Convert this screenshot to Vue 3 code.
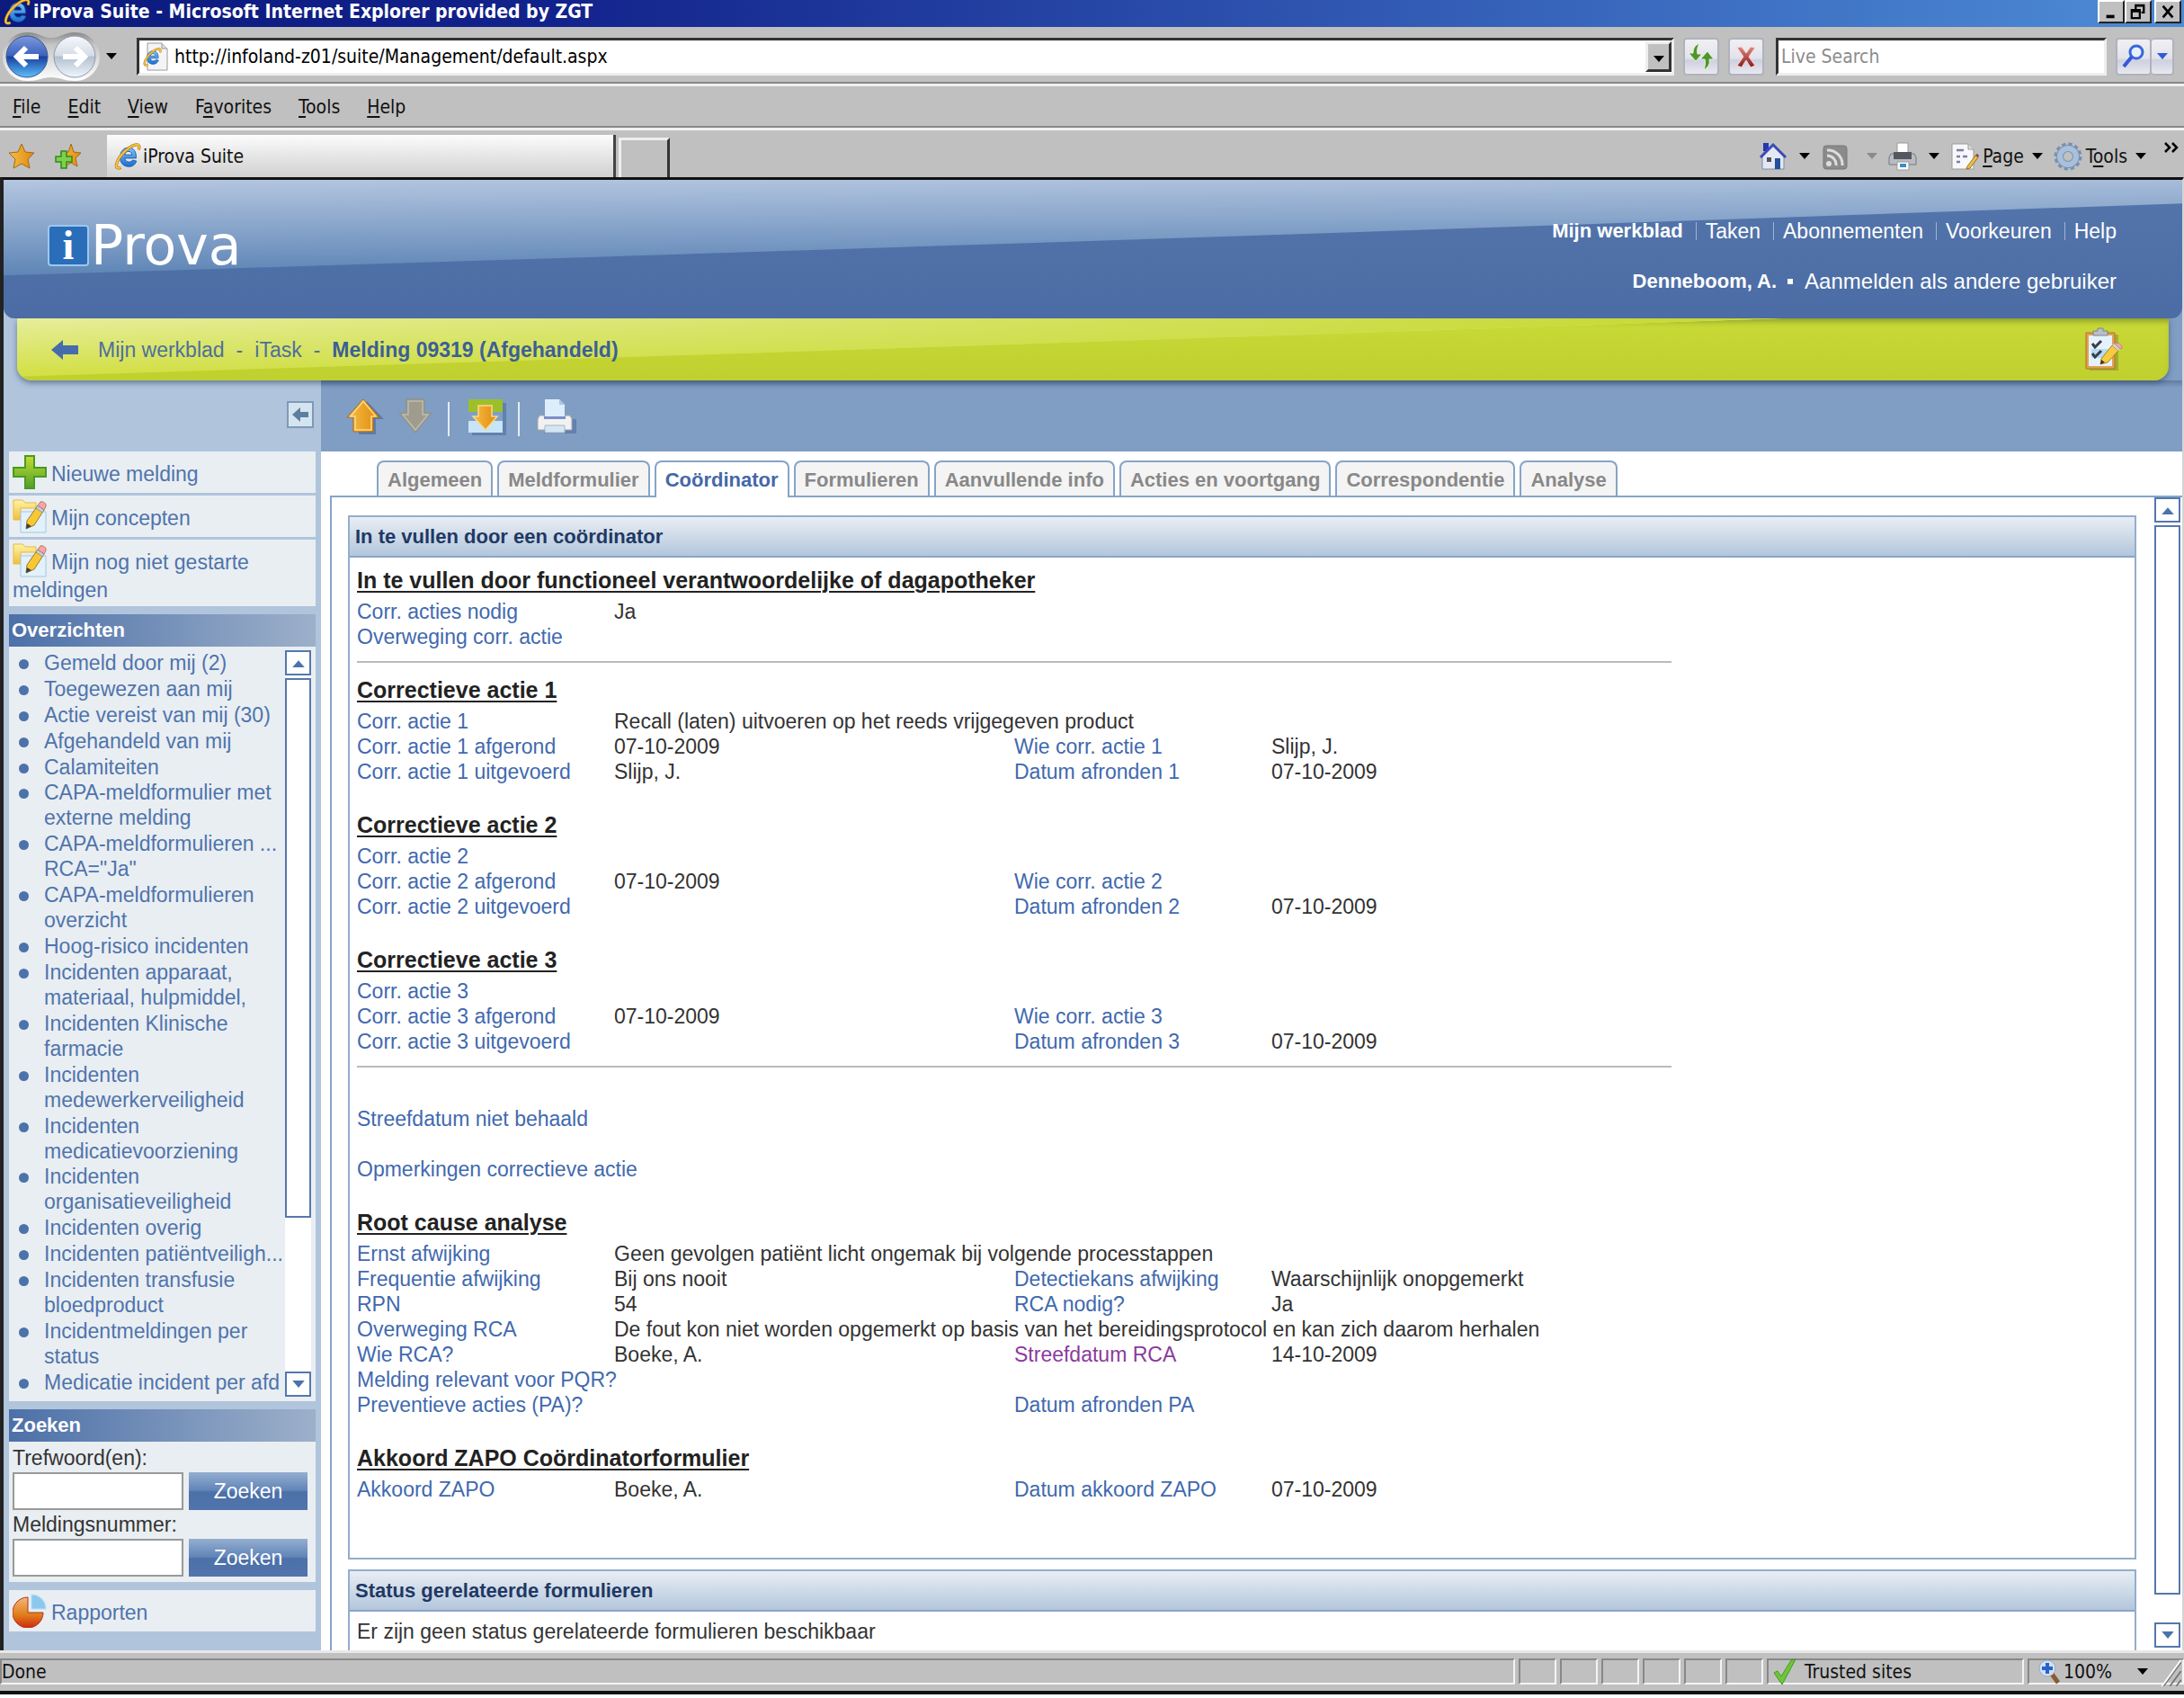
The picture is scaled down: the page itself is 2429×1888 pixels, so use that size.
<script setup>
import { ref } from 'vue'

const address = ref('http://infoland-z01/suite/Management/default.aspx')
const search = ref('')
const keyword = ref('')
const reportNumber = ref('')
const activeTab = ref('Coördinator')

// menu items: text before, the underlined key, text after
const menu = [
  ['', 'F', 'ile'],
  ['', 'E', 'dit'],
  ['', 'V', 'iew'],
  ['F', 'a', 'vorites'],
  ['', 'T', 'ools'],
  ['', 'H', 'elp'],
]

const tabs = [
  'Algemeen',
  'Meldformulier',
  'Coördinator',
  'Formulieren',
  'Aanvullende info',
  'Acties en voortgang',
  'Correspondentie',
  'Analyse',
]

const overviews = [
  ['Gemeld door mij (2)'],
  ['Toegewezen aan mij'],
  ['Actie vereist van mij (30)'],
  ['Afgehandeld van mij'],
  ['Calamiteiten'],
  ['CAPA-meldformulier met', 'externe melding'],
  ['CAPA-meldformulieren ...', 'RCA="Ja"'],
  ['CAPA-meldformulieren', 'overzicht'],
  ['Hoog-risico incidenten'],
  ['Incidenten apparaat,', 'materiaal, hulpmiddel,'],
  ['Incidenten Klinische', 'farmacie'],
  ['Incidenten', 'medewerkerveiligheid'],
  ['Incidenten', 'medicatievoorziening'],
  ['Incidenten', 'organisatieveiligheid'],
  ['Incidenten overig'],
  ['Incidenten patiëntveiligh...'],
  ['Incidenten transfusie', 'bloedproduct'],
  ['Incidentmeldingen per', 'status'],
  ['Medicatie incident per afd'],
]

// every row: label, value, label, value
const sections = [
  {
    title: 'In te vullen door functioneel verantwoordelijke of dagapotheker',
    line: true,
    rows: [['Corr. acties nodig', 'Ja'], ['Overweging corr. actie', '']],
  },
  {
    title: 'Correctieve actie 1',
    rows: [
      ['Corr. actie 1', 'Recall (laten) uitvoeren op het reeds vrijgegeven product'],
      ['Corr. actie 1 afgerond', '07-10-2009', 'Wie corr. actie 1', 'Slijp, J.'],
      ['Corr. actie 1 uitgevoerd', 'Slijp, J.', 'Datum afronden 1', '07-10-2009'],
    ],
  },
  {
    title: 'Correctieve actie 2',
    rows: [
      ['Corr. actie 2', ''],
      ['Corr. actie 2 afgerond', '07-10-2009', 'Wie corr. actie 2', ''],
      ['Corr. actie 2 uitgevoerd', '', 'Datum afronden 2', '07-10-2009'],
    ],
  },
  {
    title: 'Correctieve actie 3',
    line: true,
    rows: [
      ['Corr. actie 3', ''],
      ['Corr. actie 3 afgerond', '07-10-2009', 'Wie corr. actie 3', ''],
      ['Corr. actie 3 uitgevoerd', '', 'Datum afronden 3', '07-10-2009'],
    ],
  },
  { loose: true, rows: [['Streefdatum niet behaald', '']] },
  { rows: [['Opmerkingen correctieve actie', '']] },
  {
    title: 'Root cause analyse',
    rows: [
      ['Ernst afwijking', 'Geen gevolgen patiënt licht ongemak bij volgende processtappen'],
      ['Frequentie afwijking', 'Bij ons nooit', 'Detectiekans afwijking', 'Waarschijnlijk onopgemerkt'],
      ['RPN', '54', 'RCA nodig?', 'Ja'],
      ['Overweging RCA', 'De fout kon niet worden opgemerkt op basis van het bereidingsprotocol en kan zich daarom herhalen'],
      ['Wie RCA?', 'Boeke, A.', 'Streefdatum RCA', '14-10-2009'],
      ['Melding relevant voor PQR?', ''],
      ['Preventieve acties (PA)?', '', 'Datum afronden PA', ''],
    ],
  },
  {
    title: 'Akkoord ZAPO Coördinatorformulier',
    rows: [['Akkoord ZAPO', 'Boeke, A.', 'Datum akkoord ZAPO', '07-10-2009']],
  },
]
</script>

<template>
  <div class="window">
    <!-- shared drawings -->
    <svg class="defs" aria-hidden="true">
      <defs>
        <linearGradient id="gBlue" x1="0" y1="0" x2="0" y2="1">
          <stop offset="0" stop-color="#7fc4f5" /><stop offset="1" stop-color="#1a6fd0" />
        </linearGradient>
        <linearGradient id="gOrange" x1="0" y1="0" x2="1" y2="0">
          <stop offset="0" stop-color="#f6bd48" /><stop offset="1" stop-color="#e08a0c" />
        </linearGradient>
        <linearGradient id="gGreen" x1="0" y1="0" x2="0" y2="1">
          <stop offset="0" stop-color="#c5dc30" /><stop offset="1" stop-color="#4da02c" />
        </linearGradient>
        <linearGradient id="gBack" x1="0" y1="0" x2="0" y2="1">
          <stop offset="0" stop-color="#7c98dc" /><stop offset="0.48" stop-color="#3c62bd" />
          <stop offset="0.5" stop-color="#173f9f" /><stop offset="1" stop-color="#5cc0fa" />
        </linearGradient>
        <linearGradient id="gNext" x1="0" y1="0" x2="0" y2="1">
          <stop offset="0" stop-color="#f6f8fc" /><stop offset="0.48" stop-color="#d5dbe6" />
          <stop offset="0.5" stop-color="#b3bfce" /><stop offset="1" stop-color="#edf7fd" />
        </linearGradient>
        <linearGradient id="gShell" x1="0" y1="0" x2="0" y2="1">
          <stop offset="0" stop-color="#8a8a8a" /><stop offset="0.25" stop-color="#c4c4c4" /><stop offset="1" stop-color="#ffffff" />
        </linearGradient>
        <linearGradient id="gFolder" x1="0" y1="0" x2="0" y2="1">
          <stop offset="0" stop-color="#fff3a8" /><stop offset="1" stop-color="#f0bf3a" />
        </linearGradient>
        <linearGradient id="gPie" x1="0" y1="0" x2="0" y2="1">
          <stop offset="0" stop-color="#f2b878" /><stop offset="0.6" stop-color="#e07a18" /><stop offset="1" stop-color="#cc2a12" />
        </linearGradient>
        <linearGradient id="gRed" x1="0" y1="0" x2="0" y2="1">
          <stop offset="0" stop-color="#e2857f" /><stop offset="1" stop-color="#8a1c1c" />
        </linearGradient>
      </defs>
      <symbol id="ie" viewBox="0 0 32 32">
        <path d="M26 18H12.500c.6 3 2.500 4.500 5.200 4.500 2 0 3.300-.9 4.200-2.200l4.600 1.200C24.600 26 21.600 28 17.400 28 10.800 28 7 23.600 7 17 7 10.400 11 5.500 17 5.500S26.500 10 26 18ZM12.600 14h8.500c-.4-2.600-1.700-4-4.100-4s-3.900 1.400-4.400 4Z" fill="url(#gBlue)" stroke="#1b57b4" stroke-width="1" />
        <path d="M29 8c1.500-4 .5-6.500-3-6C19 3 6 14 3 24c-1.500 5 .5 7 5 5" fill="none" stroke="#b77a10" stroke-width="3.500" />
        <path d="M29 8c1.500-4 .5-6.500-3-6C19 3 6 14 3 24c-1.500 5 .5 7 5 5" fill="none" stroke="#f8c843" stroke-width="2" />
      </symbol>
      <symbol id="draft" viewBox="0 0 38 38">
        <path d="M1 1h10l3 3h12v6H9v13H1Z" fill="url(#gFolder)" stroke="#e8b93c" />
        <path d="M9 14h28v23H9Z" fill="#e3f1fb" stroke="#9fc8e6" />
        <path d="m16 24 12-17 7 5-11 17-9 4Z" fill="#f8c832" stroke="#8f7a3a" />
        <path d="m26 10 7 5 2-3-7-5Z" fill="#c9ced4" stroke="#8e949c" />
        <path d="m28 7 3-4c3-1 7 2 6 5l-2 4Z" fill="#f2a9a3" stroke="#c4716c" />
        <path d="m15 33 1-6 5 3Z" fill="#3d3d3d" />
      </symbol>
      <symbol id="down" viewBox="0 0 12 8"><path d="M0 0h12L6 7Z" fill="currentColor" /></symbol>
    </svg>

    <header class="title-bar">
      <svg class="ie-icon"><use href="#ie" /></svg>
      <span class="title-text">iProva Suite - Microsoft Internet Explorer provided by ZGT</span>
      <div class="window-buttons">
        <button aria-label="Minimize"><svg viewBox="0 0 20 24"><path d="M4 18h10" stroke="#000" stroke-width="4" /></svg></button>
        <button aria-label="Restore"><svg viewBox="0 0 20 24"><path d="M7 9V4h10v9h-3M7 4.500h10M2 10h10v10H2ZM2 11.500h10" fill="none" stroke="#000" stroke-width="2.500" /></svg></button>
        <button class="close" aria-label="Close"><svg viewBox="0 0 20 24"><path d="m4 5 12 14M16 5 4 19" stroke="#000" stroke-width="3" /></svg></button>
      </div>
    </header>

    <div class="nav-bar">
      <div class="nav-buttons">
        <svg class="shell" viewBox="0 0 112 56">
          <path d="M30 1c14 0 16 6 27 6s13-6 27-6a27 27 0 0 1 0 54c-14 0-16-4-27-4s-13 4-27 4a27 27 0 0 1 0-54Z" fill="url(#gShell)" />
          <circle cx="30" cy="28" r="23" fill="url(#gBack)" stroke="#3a5590" />
          <circle cx="83" cy="28" r="23" fill="url(#gNext)" stroke="#8c99ad" />
          <path d="M43 28H20M29 18 19 28l10 10" fill="none" stroke="#fff" stroke-width="6" />
          <path d="M70 28h23M84 18l10 10-10 10" fill="none" stroke="#fff" stroke-width="6" />
        </svg>
      </div>
      <svg class="arrow"><use href="#down" /></svg>
      <div class="address">
        <svg class="page-icon" viewBox="0 0 28 32">
          <path d="M5 1h16l6 6v24H5Z" fill="#f4f4f4" stroke="#9a9a9a" /><path d="M21 1v6h6" fill="#ddd" stroke="#9a9a9a" />
          <use href="#ie" x="0" y="6" width="21" height="21" />
        </svg>
        <input v-model="address" type="text" aria-label="Address">
        <button class="combo" aria-label="Show addresses"><svg class="arrow"><use href="#down" /></svg></button>
      </div>
      <button class="soft" aria-label="Refresh">
        <svg viewBox="0 0 32 32"><path d="M14 1C8 4 7 8 7 12H2l8 9 7-8h-5c-1-4 0-8 2-12ZM19 31c6-4 7-8 6-12h5l-7-9-8 9h5c1 4 0 8-1 12Z" fill="#4e962c" stroke="#e8f2e0" /></svg>
      </button>
      <button class="soft" aria-label="Stop">
        <svg viewBox="0 0 32 32"><path d="m6 6 5-1 5 7 5-7 5 1-7 10 7 10-5 2-5-8-5 8-5-2 7-10Z" fill="url(#gRed)" stroke="#f4dada" /></svg>
      </button>
      <input v-model="search" class="live-search" type="text" placeholder="Live Search" aria-label="Live Search">
      <div class="search-buttons">
        <button class="soft" aria-label="Search"><svg viewBox="0 0 32 32"><circle cx="19" cy="11" r="7" fill="#e6f1ff" stroke="#3a66dc" stroke-width="3" /><path d="m14 16-9 11" stroke="#2f5bd8" stroke-width="4" /></svg></button>
        <button class="soft narrow" aria-label="Search options"><svg class="arrow blue"><use href="#down" /></svg></button>
      </div>
    </div>

    <nav class="menu-bar">
      <a v-for="m in menu" :key="m.join('')" href="#">{{ m[0] }}<u>{{ m[1] }}</u>{{ m[2] }}</a>
    </nav>

    <div class="tab-bar">
      <svg class="star" viewBox="0 0 30 30"><path d="m15 1 4 9 10 1-7 7 2 10-9-5-9 5 2-10-7-7 10-1Z" fill="url(#gOrange)" stroke="#a06a18" /></svg>
      <svg class="star" viewBox="0 0 30 30">
        <path d="m18 1 3 9 8 1-6 6 2 9-7-4-7 4 1-9-6-6 9-1Z" fill="url(#gOrange)" stroke="#a06a18" />
        <path d="M7 9h6v6h6v6h-6v7H7v-7H1v-6h6Z" fill="#7ed04a" stroke="#2f8a1c" stroke-width="1.500" />
      </svg>
      <div class="page-tab"><svg class="ie-icon"><use href="#ie" /></svg>iProva Suite</div>
      <button class="new-tab" aria-label="New tab"></button>
      <div class="commands">
        <svg class="cmd" viewBox="0 0 32 32">
          <path d="M5 1h6v9H5Z" fill="#2438b0" /><path d="M4 15 16 4l12 11v15H4Z" fill="#e4e8f2" stroke="#8088a8" />
          <path d="M2 17 16 3l14 14" fill="none" stroke="#3b4ab8" stroke-width="3" /><path d="M18 18h6v12h-6Z" fill="#24509c" />
          <path d="M9 17h5v5H9Z" fill="#50545c" />
        </svg>
        <svg class="arrow"><use href="#down" /></svg>
        <svg class="cmd" viewBox="0 0 32 32">
          <rect x="3" y="4" width="26" height="26" rx="3" fill="#8b8b8b" stroke="#777" />
          <circle cx="9" cy="24" r="3" fill="#ddd" /><path d="M7 15a10 10 0 0 1 10 11M7 9a16 16 0 0 1 17 17" fill="none" stroke="#ddd" stroke-width="3" />
        </svg>
        <svg class="arrow grey"><use href="#down" /></svg>
        <svg class="cmd" viewBox="0 0 32 32">
          <path d="M10 1h12v13H10Z" fill="#fff" stroke="#999" /><path d="M3 13h26l2 4v8H1v-8Z" fill="#b9bcc2" stroke="#76797f" />
          <path d="M6 11h20v8H6Z" fill="#55585e" /><path d="M10 22h13v9H10Z" fill="#fff" stroke="#999" /><path d="M13 24h7v4h-7Z" fill="#3a8fc8" />
        </svg>
        <svg class="arrow"><use href="#down" /></svg>
        <svg class="cmd" viewBox="0 0 32 32">
          <path d="M2 2h18l6 6v22H2Z" fill="#f8f8fb" stroke="#9a9a9a" /><path d="M20 2v6h6" fill="#ddd" stroke="#9a9a9a" />
          <path d="M7 9h8M7 16h4M7 22h4M14 16h5" stroke="#7a80a4" stroke-width="2.500" />
          <path d="m19 27 9-12 3 2-9 12-4 1Z" fill="#ecc04c" stroke="#957022" /><path d="m28 14 2-1 2 2-1 2Z" fill="#a33" />
        </svg>
        <span><u>P</u>age</span>
        <svg class="arrow"><use href="#down" /></svg>
        <svg class="cmd" viewBox="0 0 32 32">
          <circle cx="16" cy="16" r="13" fill="none" stroke="#7890b0" stroke-width="5" stroke-dasharray="4 2.800" />
          <circle cx="16" cy="16" r="9" fill="none" stroke="#7890b0" stroke-width="8" /><circle cx="16" cy="16" r="9" fill="none" stroke="#a9c0dc" stroke-width="6" />
        </svg>
        <span>T<u>o</u>ols</span>
        <svg class="arrow"><use href="#down" /></svg>
        <svg class="more" viewBox="0 0 16 14"><path d="m1 1 5 5-5 5M9 1l5 5-5 5" fill="none" stroke="#000" stroke-width="2.500" /></svg>
      </div>
    </div>

    <main class="page">
      <div class="banner">
        <svg class="gloss" viewBox="0 0 100 100" preserveAspectRatio="none">
          <defs>
            <linearGradient id="gloss1" x1="0" y1="0" x2="0.150" y2="1">
              <stop offset="0" stop-color="#b4c6e0" /><stop offset="1" stop-color="#5c84b5" />
            </linearGradient>
          </defs>
          <path d="M0 0H100V17Q50 45 0 69Z" fill="url(#gloss1)" />
        </svg>
        <div class="logo"><span class="logo-i">i</span><span class="logo-text">Prova</span></div>
        <div class="account">
          <nav class="links">
            <a href="#" class="current">Mijn werkblad</a><i></i><a href="#">Taken</a><i></i><a href="#">Abonnementen</a><i></i><a href="#">Voorkeuren</a><i></i><a href="#">Help</a>
          </nav>
          <div class="user"><b>Denneboom, A.</b><span class="square"></span><a href="#">Aanmelden als andere gebruiker</a></div>
        </div>
      </div>

      <div class="crumb-bar">
        <svg class="gloss" viewBox="0 0 100 100" preserveAspectRatio="none">
          <defs>
            <linearGradient id="gloss2" x1="0" y1="0" x2="0" y2="1">
              <stop offset="0" stop-color="#e6ee9c" /><stop offset="1" stop-color="#d2df42" />
            </linearGradient>
            <linearGradient id="gloss2b" x1="0" y1="0" x2="1" y2="0">
              <stop offset="0" stop-color="#c6d832" stop-opacity="0" /><stop offset="1" stop-color="#c6d832" />
            </linearGradient>
          </defs>
          <path d="M0 0H82Q40 50 0 94Z" fill="url(#gloss2)" /><path d="M0 0H82Q40 50 0 94Z" fill="url(#gloss2b)" />
        </svg>
        <svg class="back" viewBox="0 0 32 24"><path d="m1 12 13-11v6h17v10H14v6Z" fill="#466cab" /></svg>
        <div class="crumbs"><a href="#">Mijn werkblad</a><span>-</span><a href="#">iTask</a><span>-</span><b>Melding 09319 (Afgehandeld)</b></div>
        <svg class="clipboard" viewBox="0 0 44 50">
          <path d="M6 8h32v40H6Z" fill="#7e8a2a" opacity="0.500" /><path d="M2 6h32v40H2Z" fill="#e0a052" stroke="#b0722c" /><path d="M5 9h26v34H5Z" fill="#e6f2fb" />
          <path d="M8 24h20v10H8Z" fill="#b9dcf4" /><path d="M10 8V4h5V1h6v3h5v5H10Z" fill="#b9bfc8" stroke="#7d838c" />
          <path d="m9 18 3 4 7-7M9 29l3 4 7-7" fill="none" stroke="#3a3f48" stroke-width="3" />
          <path d="m19 35 12-15 7 6-12 13-8 2Z" fill="#f7cb3c" stroke="#a98522" /><path d="m31 20 3-2 7 5-3 3Z" fill="#ccd2d8" /><path d="m34 18c4-2 8 1 8 5l-2 1Z" fill="#efa9a4" stroke="#c8807c" />
          <path d="m18 41 1-5 4 3Z" fill="#333" />
        </svg>
      </div>

      <div class="columns">
        <aside class="sidebar">
          <div class="side-top">
            <button class="collapse" aria-label="Inklappen"><svg viewBox="0 0 20 20"><path d="m1 10 9-8v5h9v6h-9v5Z" fill="#5d7f9f" /></svg></button>
          </div>
          <div class="side-link">
            <svg viewBox="0 0 38 38"><path d="M14 1h10v13h13v10H24v13H14V24H1V14h13Z" fill="url(#gGreen)" stroke="#4a9a24" stroke-width="2" /></svg><a href="#">Nieuwe melding</a>
          </div>
          <div class="side-link"><svg><use href="#draft" /></svg><a href="#">Mijn concepten</a></div>
          <div class="side-link two"><svg><use href="#draft" /></svg><a href="#">Mijn nog niet gestarte meldingen</a></div>

          <h2 class="first">Overzichten</h2>
          <div class="overview">
            <ul>
              <li v-for="(o, i) in overviews" :key="i"><a href="#"><span v-for="line in o" :key="line">{{ line }}</span></a></li>
            </ul>
            <div class="scroll">
              <button aria-label="Omhoog"><svg class="up"><use href="#down" /></svg></button>
              <div class="thumb"></div>
              <button aria-label="Omlaag"><svg><use href="#down" /></svg></button>
            </div>
          </div>

          <h2>Zoeken</h2>
          <form class="side-search" @submit.prevent>
            <label for="keyword">Trefwoord(en):</label>
            <div class="field"><input id="keyword" v-model="keyword" type="text"><button>Zoeken</button></div>
            <label for="reportNumber">Meldingsnummer:</label>
            <div class="field"><input id="reportNumber" v-model="reportNumber" type="text"><button>Zoeken</button></div>
          </form>

          <div class="side-link reports">
            <svg viewBox="0 0 38 38">
              <path d="M17 4v17h17A17 17 0 1 1 17 4Z" fill="url(#gPie)" stroke="#b5301a" /><path d="M21 1c9 0 16 7 16 16H21Z" fill="#8cc8ee" stroke="#b9e0f6" />
            </svg><a href="#">Rapporten</a>
          </div>
        </aside>

        <section class="content">
          <div class="tools">
            <svg viewBox="0 0 44 44"><path d="m24 4 19 20H34v17H15V24" fill="#4d6ea0" opacity="0.700" /><path d="m20 2 18 20H31v16H9V22H2Z" fill="url(#gOrange)" stroke="#b06c08" /><path d="m20 4 14 17h-5v15H11V21H6Z" fill="none" stroke="#fbd98a" stroke-width="1.500" /></svg>
            <svg viewBox="0 0 44 44"><path d="M11 2h20v15h8L21 39 3 17h8Z" fill="#a09b8c" stroke="#8a927f" /><path d="M13 4h16v15h6L21 36 7 19h6Z" fill="none" stroke="#bdbcae" stroke-width="1.500" /></svg>
            <i></i>
            <svg viewBox="0 0 44 44">
              <path d="M6 6h38v36H6Z" fill="#4d6ea0" opacity="0.600" /><path d="M2 2h38v14H2Z" fill="#9cc02a" /><path d="M2 16h38v10H2Z" fill="#7f9fc6" /><path d="M2 26h38v13H2Z" fill="#c8e4f8" />
              <path d="M13 9h15v12h6L21 36 7 21h6Z" fill="url(#gOrange)" stroke="#fbd98a" stroke-width="1.500" />
            </svg>
            <i></i>
            <svg viewBox="0 0 44 44">
              <path d="M8 24h36v16H8Z" fill="#4d6ea0" opacity="0.600" /><path d="M9 2h16l6 6v16H9Z" fill="#deedfb" /><path d="M25 2v6h6Z" fill="#a9c6e6" />
              <path d="M3 20h5l1 3h22l1-3h5l2 4v12H1V24Z" fill="#f2f1ef" stroke="#a6a4ac" /><path d="M8 21h24v3H8Z" fill="#7a90cc" /><path d="M9 31h22v8H9Z" fill="#d4e6f4" stroke="#a8b6c4" />
            </svg>
          </div>

          <nav class="tabs">
            <button v-for="t in tabs" :key="t" :class="{ active: t === activeTab }" @click="activeTab = t">{{ t }}</button>
          </nav>

          <div class="frame">
            <div class="panels">
              <div class="panel">
                <h3>In te vullen door een coördinator</h3>
                <div class="form">
                  <div v-for="(s, i) in sections" :key="i" class="section" :class="{ line: s.line, loose: s.loose }">
                    <h4 v-if="s.title"><u>{{ s.title }}</u></h4>
                    <table>
                      <colgroup><col class="c-label"><col class="c-value"><col class="c-label"><col></colgroup>
                      <tbody>
                        <tr v-for="r in s.rows" :key="r[0]">
                          <th scope="row">{{ r[0] }}</th>
                          <td :colspan="r[2] ? 1 : 3">{{ r[1] }}</td>
                          <th v-if="r[2]" scope="row" :class="{ visited: r[2] === 'Streefdatum RCA' }">{{ r[2] }}</th>
                          <td v-if="r[2]">{{ r[3] }}</td>
                        </tr>
                      </tbody>
                    </table>
                  </div>
                </div>
              </div>
              <div class="panel rest">
                <h3>Status gerelateerde formulieren</h3>
                <p>Er zijn geen status gerelateerde formulieren beschikbaar</p>
              </div>
            </div>
            <div class="scroll">
              <button aria-label="Omhoog"><svg class="up"><use href="#down" /></svg></button>
              <div class="thumb long"></div>
              <button aria-label="Omlaag"><svg><use href="#down" /></svg></button>
            </div>
          </div>
        </section>
      </div>
    </main>

    <footer class="status-bar">
      <div class="cell grow">Done</div>
      <div v-for="n in 6" :key="n" class="cell small"></div>
      <div class="cell zone">
        <svg viewBox="0 0 28 30"><path d="m2 16 4-2 4 6L21 2l5-1-15 28Z" fill="#6fc63a" stroke="#3f9a1c" /></svg>Trusted sites
      </div>
      <div class="cell zoom">
        <svg viewBox="0 0 24 28"><path d="m14 15 8 11" stroke="#8a5a30" stroke-width="5" /><circle cx="10" cy="10" r="9" fill="#cfe0f6" stroke="#9ab" /><path d="M10 4v12M4 10h12" stroke="#2a62c8" stroke-width="4" /></svg>
        100%<svg class="arrow"><use href="#down" /></svg>
        <svg class="grip" viewBox="0 0 24 36"><path d="M2 36 24 6M10 36l14-19M18 36l6-8" stroke="#777" stroke-width="2" /><path d="M0 36 24 3" stroke="#fff" stroke-width="2" /></svg>
      </div>
    </footer>
  </div>
</template>

<style>
body {
  background: #fff;
}
</style>

<style scoped>
* {
  box-sizing: border-box;
}

.window {
  display: flex;
  flex-direction: column;
  min-height: 100vh;
  padding-bottom: 5px;
  font-family: "DejaVu Sans Condensed", "DejaVu Sans", Tahoma, sans-serif;
  font-stretch: condensed;
  font-size: 21px;
  color: #111;
}

button {
  padding: 0;
  border: 0;
  font: inherit;
  background: none;
}

input {
  min-width: 0;
  padding: 0;
  border: 0;
  outline: 0;
  font: inherit;
}

a {
  color: inherit;
  text-decoration: none;
}

svg {
  flex: none;
}

.defs {
  position: absolute;
  width: 0;
  height: 0;
}

.arrow {
  width: 12px;
  height: 8px;
  color: #000;
}

.arrow.grey {
  color: #8a8a8a;
}

.arrow.blue {
  color: #2f5bd8;
}

/* title bar */
.title-bar {
  display: flex;
  align-items: center;
  height: 30px;
  padding: 0 3px 4px 4px;
  background: linear-gradient(90deg, #0c1a7c, #12228c 25%, #3560b8 68%, #4d8cd6);
  color: #fff;
  font-weight: bold;
}

.ie-icon {
  width: 30px;
  height: 30px;
}

.title-text {
  flex: 1;
  padding-left: 3px;
}

.window-buttons {
  display: flex;
}

.window-buttons button {
  width: 30px;
  height: 26px;
  background: #c0c0c0;
  border: 2px solid;
  border-color: #fff #222 #222 #fff;
}

.window-buttons svg {
  width: 18px;
  height: 22px;
}

.window-buttons .close {
  margin-left: 3px;
}

/* address row */
.nav-bar {
  display: flex;
  align-items: center;
  height: 66px;
  padding: 2px 11px 0 0;
  background: #c0c0c0;
  border-bottom: 3px solid #f0f0f0;
  box-shadow: inset 0 -2px #888;
}

.nav-buttons {
  width: 118px;
}

.shell {
  display: block;
  width: 112px;
  height: 56px;
}

.address,
.live-search {
  height: 42px;
  background: #fff;
  border: 3px solid;
  border-color: #333 #eee #eee #333;
}

.address {
  display: flex;
  flex: 1;
  align-items: center;
  margin: 0 10px 0 22px;
}

.address input {
  flex: 1;
  padding-left: 7px;
}

.page-icon {
  width: 28px;
  height: 32px;
  margin-left: 4px;
}

.combo {
  width: 29px;
  height: 34px;
  background: #c0c0c0;
  border: 3px solid;
  border-color: #eee #333 #333 #eee;
}

.soft {
  display: flex;
  align-items: center;
  justify-content: center;
  width: 40px;
  height: 42px;
  margin-right: 10px;
  background: linear-gradient(#f0f0f4, #e2e3ea 55%, #cdd0e0 60%, #e8e8ee);
  border: 2px solid #b0b2bc;
  border-radius: 4px;
}

.soft svg {
  width: 32px;
  height: 32px;
}

.soft svg.arrow {
  width: 12px;
  height: 8px;
}

.live-search {
  width: 368px;
  margin: 0 10px 0 3px;
  padding-left: 3px;
}

.live-search::placeholder {
  color: #8c8c8c;
  opacity: 1;
}

.search-buttons {
  display: flex;
}

.search-buttons .soft {
  margin: 0;
}

.search-buttons .narrow {
  width: 25px;
  border-left: 0;
}

/* menu row */
.menu-bar {
  display: flex;
  align-items: center;
  gap: 30px;
  height: 49px;
  padding: 0 14px;
  background: #c0c0c0;
  border-bottom: 3px solid #f0f0f0;
  box-shadow: inset 0 -2px #888;
}

u {
  text-decoration-thickness: 2px;
  text-underline-offset: 3px;
}

/* browser tabs */
.tab-bar {
  display: flex;
  align-items: center;
  height: 52px;
  padding: 5px 6px 0 9px;
  background: #c0c0c0;
}

.star {
  width: 30px;
  height: 30px;
  margin-right: 22px;
}

.page-tab {
  display: flex;
  align-items: center;
  align-self: stretch;
  width: 566px;
  margin-left: 6px;
  padding-left: 8px;
  background: linear-gradient(#fcfcfc, #d0d0d0);
  border-right: 3px solid #444;
}

.page-tab .ie-icon {
  margin-right: 2px;
}

.new-tab {
  align-self: stretch;
  width: 57px;
  margin: 3px 0 0 3px;
  border: 3px solid;
  border-color: #eee #333 transparent #eee;
  border-bottom: 0;
}

.commands {
  display: flex;
  flex: 1;
  align-items: center;
  justify-content: flex-end;
}

.cmd {
  width: 32px;
  height: 32px;
  margin: 0 4px 0 12px;
}

.commands .arrow {
  margin-left: 9px;
}

.commands .arrow.grey {
  margin-left: 15px;
}

.more {
  align-self: flex-start;
  width: 16px;
  height: 14px;
  margin-left: 20px;
}

/* web page */
.page {
  display: flex;
  flex: 1;
  flex-direction: column;
  border: solid;
  border-width: 3px 2px 0 4px;
  border-color: #111 #d4d4d4 #d4d4d4 #222;
  background: linear-gradient(90deg, #b0c4dc 353px, #809dc3 353px);
  font-family: "Liberation Sans", Arial, sans-serif;
  font-stretch: normal;
  font-size: 23px;
  line-height: 28px;
}

.banner {
  position: relative;
  z-index: 1;
  display: flex;
  justify-content: space-between;
  height: 154px;
  padding: 0 73px 0 49px;
  overflow: hidden;
  background: linear-gradient(#5476ac, #4b6ca4);
  border-radius: 0 0 12px 12px;
  color: #fff;
}

.gloss {
  position: absolute;
  inset: 0;
  width: 100%;
  height: 100%;
}

.logo {
  position: relative;
  display: flex;
  align-items: center;
  gap: 2px;
  height: 146px;
}

.logo-i {
  width: 46px;
  height: 46px;
  background: #2a6db8;
  border: 2px solid #9cc8ee;
  border-radius: 4px;
  font: bold 46px/42px "Liberation Serif", serif;
  text-align: center;
}

.logo-text {
  font: 60px/60px "DejaVu Sans", sans-serif;
}

.account {
  position: relative;
  display: flex;
  flex-direction: column;
  align-items: flex-end;
  gap: 28px;
  padding-top: 43px;
}

.links,
.user {
  display: flex;
  align-items: center;
}

.links i {
  width: 1px;
  height: 20px;
  margin: 0 10px 0 14px;
  background: #9db2d4;
}

.links .current,
.user b {
  font-size: 22px;
  font-weight: bold;
}

.user a {
  font-size: 24px;
}

.square {
  width: 6px;
  height: 6px;
  margin: 0 13px 0 12px;
  background: #fff;
}

.crumb-bar {
  position: relative;
  display: flex;
  align-items: center;
  height: 69px;
  margin: 0 15px;
  padding: 0 50px 0 37px;
  background: linear-gradient(#c9d936, #bfd02f);
  border-radius: 0 0 16px 16px;
  box-shadow: 0 3px 6px rgba(50, 75, 110, 0.6), inset 0 6px 6px -3px rgba(90, 110, 40, 0.6);
  color: #4d6f9e;
}

.crumb-bar .gloss {
  border-radius: 0 0 0 16px;
}

.back {
  position: relative;
  width: 32px;
  height: 24px;
}

.crumbs {
  position: relative;
  display: flex;
  flex: 1;
  gap: 13px;
  padding-left: 21px;
}

.crumbs b {
  color: #3c5f95;
}

.clipboard {
  position: relative;
  width: 44px;
  height: 50px;
}

.columns {
  display: flex;
  flex: 1;
}

/* sidebar */
.sidebar {
  display: flex;
  flex: none;
  flex-direction: column;
  width: 353px;
  padding: 0 6px 21px;
  color: #4f74ac;
}

.side-top {
  display: flex;
  justify-content: flex-end;
  height: 79px;
  padding: 23px 2px 0;
}

.collapse {
  width: 30px;
  height: 30px;
  background: #d5e5f0;
  border: 2px solid #7e9ab8;
}

.collapse svg {
  display: block;
  width: 20px;
  height: 20px;
  margin: 3px;
}

.side-link {
  height: 46px;
  margin-bottom: 3px;
  padding: 4px;
  background: #e9eef2;
}

.side-link svg {
  width: 38px;
  height: 38px;
  margin-right: 5px;
  vertical-align: -9px;
}

.side-link.two {
  height: 74px;
}

.side-link.reports {
  margin: 9px 0 0;
}

h2 {
  flex: none;
  height: 36px;
  margin: 9px 0 0;
  padding-left: 3px;
  background: linear-gradient(90deg, #4c70a8, #9db0ca);
  color: #fff;
  font-size: 22px;
  line-height: 36px;
}

h2.first {
  margin-top: 6px;
}

.overview {
  display: flex;
  flex: 1;
  justify-content: space-between;
  padding: 4px 5px 5px 0;
  background: #e9eef2;
}

ul {
  display: flex;
  flex-direction: column;
  justify-content: space-between;
  margin: 0;
  padding: 0 0 2px;
  list-style: none;
  white-space: nowrap;
}

li {
  display: flex;
  gap: 17px;
  padding-left: 11px;
}

li::before {
  content: "";
  width: 11px;
  height: 11px;
  margin-top: 10px;
  background: #4c72ab;
  border-radius: 50%;
}

li span {
  display: block;
}

.scroll {
  display: flex;
  flex: none;
  flex-direction: column;
  gap: 3px;
  width: 29px;
  background: #fff;
}

.scroll button {
  display: flex;
  align-items: center;
  justify-content: center;
  height: 28px;
  border: 2px solid #5577ad;
  color: #4c72ab;
}

.scroll svg {
  width: 14px;
  height: 9px;
}

.up {
  rotate: 180deg;
}

.thumb {
  height: 600px;
  margin-bottom: auto;
  border: 2px solid #5577ad;
}

.thumb.long {
  flex: 1;
  margin-bottom: 28px;
}

.side-search {
  padding: 4px 4px 6px;
  background: #e9eef2;
  color: #333;
}

.side-search label {
  display: block;
  height: 30px;
}

.field {
  display: flex;
  gap: 6px;
  height: 42px;
  margin-bottom: 2px;
}

.field:last-child {
  margin-bottom: 0;
}

.field input {
  width: 190px;
  background: #fff;
  border: 2px solid #999;
}

.field button {
  width: 132px;
  background: linear-gradient(#94aed0, #6185b8 48%, #4c70a8 52%, #5074ab);
  color: #fff;
}

/* content */
.content {
  display: flex;
  flex: 1;
  flex-direction: column;
  min-width: 0;
  background: #fff;
}

.tools {
  display: flex;
  align-items: flex-start;
  height: 79px;
  padding: 19px 0 0 27px;
  background: linear-gradient(rgba(50, 75, 110, 0.4), transparent 8px) #809dc3;
}

.tools svg {
  width: 44px;
  height: 44px;
  margin-right: 13px;
}

.tools i {
  width: 2px;
  height: 38px;
  margin: 5px 19px 0 0;
  background: #e4ecf4;
}

.tabs {
  display: flex;
  align-items: flex-end;
  gap: 5px;
  height: 49px;
  padding-left: 62px;
}

.tabs button {
  position: relative;
  height: 39px;
  padding: 3px 10px 0;
  background: #f4f4f4;
  border: 2px solid #86a4c8;
  border-bottom: 0;
  border-radius: 8px 8px 0 0;
  color: #888;
  font-size: 22px;
  font-weight: bold;
}

.tabs button.active {
  z-index: 1;
  height: 41px;
  margin-bottom: -2px;
  padding-bottom: 2px;
  background: #fff;
  color: #4468a8;
}

.frame {
  display: flex;
  flex: 1;
  justify-content: space-between;
  margin-left: 10px;
  border: solid #86a4c8;
  border-width: 2px 0 0 2px;
}

.frame .scroll {
  margin: 0 2px 3px 20px;
}

.panels {
  display: flex;
  flex: 1;
  flex-direction: column;
  padding: 20px 0 0 18px;
}

.panel {
  border: 2px solid #92aecd;
  margin-bottom: 11px;
}

.panel.rest {
  flex: 1;
  margin: 0;
  border-bottom: 0;
}

h3 {
  height: 45px;
  margin: 0;
  padding-left: 6px;
  background: linear-gradient(#e9eef4, #b3c6dc);
  border-bottom: 2px solid #8aa6c8;
  color: #1f3864;
  font-size: 22px;
  line-height: 43px;
}

.form {
  max-width: 1470px;
  padding: 10px 0 62px 8px;
}

.section {
  margin-bottom: 30px;
}

.section:nth-child(5) {
  margin-bottom: 28px;
}

.section:last-child {
  margin-bottom: 0;
}

.section.loose {
  padding-top: 28px;
}

.section.line {
  margin-bottom: 15px;
  padding-bottom: 13px;
  border-bottom: 2px solid #bbb;
}

h4 {
  margin: 0 0 6px;
  color: #222;
  font-size: 25px;
  line-height: 30px;
}

table {
  width: 100%;
  table-layout: fixed;
  border-collapse: collapse;
}

.c-label {
  width: 286px;
}

.c-value {
  width: 445px;
}

th,
td {
  height: 28px;
  padding: 0;
  text-align: left;
  white-space: nowrap;
}

th {
  color: #4169ae;
  font-weight: normal;
}

th.visited {
  color: #8b3a9c;
}

td {
  color: #333;
}

p {
  margin: 0;
  padding: 8px 8px 7px;
  color: #333;
}

/* status bar */
.status-bar {
  display: flex;
  gap: 4px;
  height: 49px;
  padding: 6px 0 7px;
  background: #c0c0c0;
  border-top: 3px solid #e8e8e8;
  border-bottom: 4px solid #111;
}

.cell {
  display: flex;
  align-items: center;
  border: 2px solid;
  border-color: #888 #f4f4f4 #f4f4f4 #888;
}

.grow {
  flex: 1;
}

.small {
  width: 42px;
}

.zone {
  width: 286px;
  gap: 8px;
  padding-left: 4px;
}

.zone svg {
  width: 28px;
  height: 30px;
}

.zoom {
  width: 174px;
  padding-left: 10px;
  gap: 4px;
}

.zoom svg {
  width: 24px;
  height: 28px;
}

.zoom svg.arrow {
  width: 12px;
  height: 8px;
  margin-left: 24px;
}

.zoom svg.grip {
  width: 24px;
  height: 32px;
  margin-left: auto;
}
</style>
